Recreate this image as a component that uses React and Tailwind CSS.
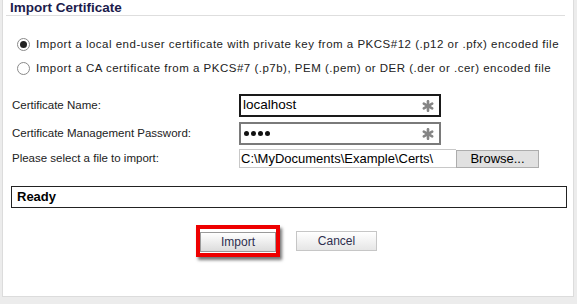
import React from 'react'

const ui = { fontFamily: '"Liberation Sans", Arial, sans-serif' }

function Radio({ checked }) {
  return (
    <span className="w-[13px] h-[13px] rounded-full border border-[#8a8a8a] bg-white flex items-center justify-center shrink-0">
      {checked && <span className="w-[7px] h-[7px] rounded-full bg-[#222]" />}
    </span>
  )
}

function Asterisk() {
  return (
    <svg width="12" height="12" viewBox="0 0 12 12" className="shrink-0">
      <g stroke="#858585" strokeWidth="2.6" strokeLinecap="round">
        <line x1="6" y1="1.2" x2="6" y2="10.8" />
        <line x1="1.8" y1="3.6" x2="10.2" y2="8.4" />
        <line x1="1.8" y1="8.4" x2="10.2" y2="3.6" />
      </g>
    </svg>
  )
}

function Field({ label, children, h }) {
  return (
    <div className={`flex items-center ${h}`}>
      <div className="w-[236px] pl-[9px] text-[11.5px] text-[#222]">{label}</div>
      {children}
    </div>
  )
}

export default function App() {
  return (
    <div className="w-[577px] h-[304px] bg-[#ececec] overflow-hidden" style={ui}>
      <div className="ml-[2px] w-[572px] h-[297px] bg-white border-l border-r border-b border-[#dcdcdc]">
        <div className="mx-[3px] mr-[8px] h-[16px] border-b border-[#dedede] pl-[4px] text-[13.5px] font-bold leading-[15px] text-[#1c1c4c]">
          Import Certificate
        </div>

        <div className="mt-[22px] pl-[14px] flex flex-col gap-[11px] text-[11.5px] tracking-[0.5px] text-[#222]">
          <label className="flex items-center gap-[6px] h-[13px]">
            <Radio checked />
            <span>Import a local end-user certificate with private key from a PKCS#12 (.p12 or .pfx) encoded file</span>
          </label>
          <label className="flex items-center gap-[6px] h-[13px]">
            <Radio />
            <span>Import a CA certificate from a PKCS#7 (.p7b), PEM (.pem) or DER (.der or .cer) encoded file</span>
          </label>
        </div>

        <div className="mt-[19px] flex flex-col">
          <Field label="Certificate Name:" h="h-[23px]">
            <div className="w-[202px] h-[23px] border-2 border-[#1a1a1a] flex items-center pl-[2px] pr-[5px]">
              <span className="flex-1 text-[13.5px] text-black">localhost</span>
              <Asterisk />
            </div>
          </Field>
          <div className="h-[5px]" />
          <Field label="Certificate Management Password:" h="h-[23px]">
            <div className="w-[202px] h-[23px] border-2 border-[#7a7a7a] flex items-center pl-[3px] pr-[5px]">
              <span className="flex-1 flex gap-[2px]">
                <span className="w-[5px] h-[5px] rounded-full bg-[#111]" />
                <span className="w-[5px] h-[5px] rounded-full bg-[#111]" />
                <span className="w-[5px] h-[5px] rounded-full bg-[#111]" />
                <span className="w-[5px] h-[5px] rounded-full bg-[#111]" />
              </span>
              <Asterisk />
            </div>
          </Field>
          <div className="h-[4px]" />
          <Field label="Please select a file to import:" h="h-[19px]">
            <div className="flex items-center h-[19px]">
              <div className="w-[217px] h-[19px] border border-[#c8c8c8] border-r-0 flex items-center pl-[1px] text-[13px] text-black whitespace-nowrap overflow-hidden">
                C:\MyDocuments\Example\Certs\
              </div>
              <button className="w-[83px] h-[18px] bg-[#e1e1e1] border border-[#adadad] text-[13px] text-black leading-none">
                Browse...
              </button>
            </div>
          </Field>
        </div>

        <div className="mt-[18px] ml-[8px] w-[556px] h-[22px] border border-[#222] flex items-center pl-[5px] text-[13px] font-bold text-black">
          Ready
        </div>

        <div className="mt-[17px] flex items-center gap-[16px] pl-[193px]">
          <div className="border-[4px] border-[#ee0000] shadow-[2px_3px_3px_rgba(0,0,0,0.55)]">
            <button className="w-[76px] h-[20px] bg-gradient-to-b from-white to-[#dcdcdc] border border-[#9a9a9a] text-[12px] text-[#2e2e4e] leading-none">
              Import
            </button>
          </div>
          <button className="w-[81px] h-[20px] bg-gradient-to-b from-white to-[#e6e6e6] border border-[#c6c6c6] text-[12px] text-[#2e2e4e] leading-none">
            Cancel
          </button>
        </div>
      </div>
    </div>
  )
}
